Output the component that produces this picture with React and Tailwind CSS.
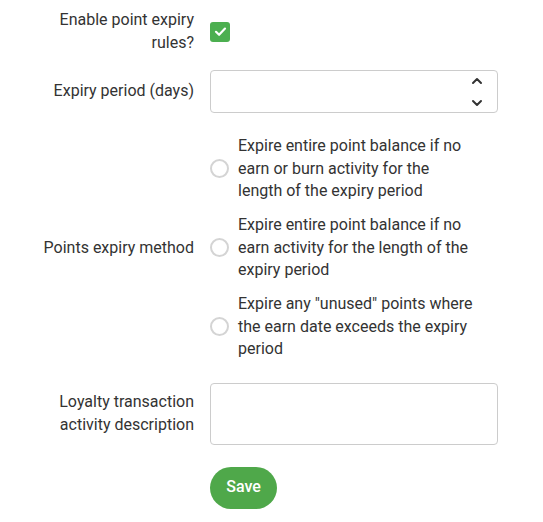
import React, { useState } from "react";

const options = [
  "Expire entire point balance if no earn or burn activity for the length of the expiry period",
  "Expire entire point balance if no earn activity for the length of the expiry period",
  'Expire any "unused" points where the earn date exceeds the expiry period',
];

function Row({ label, children, className = "" }) {
  return (
    <div className={`flex items-center gap-4 ${className}`}>
      <div className="w-[160px] shrink-0 text-right">{label}</div>
      <div className="w-[288px]">{children}</div>
    </div>
  );
}

export default function App() {
  const [enabled, setEnabled] = useState(true);
  const [method, setMethod] = useState(null);

  return (
    <div
      className="min-h-screen bg-white pl-[34px] pt-[9px] text-[16px] leading-[22.5px] text-[#333]"
      style={{ fontFamily: "Roboto, 'Liberation Sans', sans-serif" }}
    >
      <Row label={<span>Enable point expiry rules?</span>}>
        <button
          onClick={() => setEnabled(!enabled)}
          className={`flex h-5 w-5 items-center justify-center rounded-[3px] ${
            enabled ? "bg-[#4caf50]" : "border-2 border-[#ccc] bg-white"
          }`}
        >
          {enabled && (
            <svg width="13" height="13" viewBox="0 0 13 13" fill="none">
              <path d="M2 6.8 L5.1 9.8 L11 3.6" stroke="white" strokeWidth="2.2" strokeLinecap="round" strokeLinejoin="round" />
            </svg>
          )}
        </button>
      </Row>

      <Row label="Expiry period (days)" className="mt-4">
        <div className="relative h-[43px] rounded border border-[#ccc]">
          <input type="text" className="h-full w-full bg-transparent px-3 outline-none" />
          <div className="absolute right-[14px] top-[6px] flex flex-col gap-[14px]">
            <svg width="12" height="8" viewBox="0 0 12 8" fill="none">
              <path d="M2 6 L6 2 L10 6" stroke="#333" strokeWidth="2" strokeLinecap="round" strokeLinejoin="round" />
            </svg>
            <svg width="12" height="8" viewBox="0 0 12 8" fill="none">
              <path d="M2 2 L6 6 L10 2" stroke="#333" strokeWidth="2" strokeLinecap="round" strokeLinejoin="round" />
            </svg>
          </div>
        </div>
      </Row>

      <Row label="Points expiry method" className="mt-[22px]">
        <div className="flex flex-col gap-[11.5px]">
          {options.map((o, i) => (
            <label key={i} className="flex cursor-pointer items-center gap-[9px]">
              <span
                onClick={() => setMethod(i)}
                className={`flex h-[19px] w-[19px] shrink-0 items-center justify-center rounded-full border-2 ${
                  method === i ? "border-[#4caf50]" : "border-[#d4d4d4]"
                }`}
              >
                {method === i && <span className="h-[9px] w-[9px] rounded-full bg-[#4caf50]" />}
              </span>
              <span className="w-[237px]">{o}</span>
            </label>
          ))}
        </div>
      </Row>

      <Row
        label={<span>Loyalty transaction activity description</span>}
        className="mt-[22px]"
      >
        <textarea className="block h-[62px] w-full resize-none rounded border border-[#ccc] px-3 py-2 outline-none" />
      </Row>

      <div className="mt-[22px] pl-[176px]">
        <button className="h-[42px] w-[67px] rounded-full bg-[#4fa84a] font-medium text-white">
          Save
        </button>
      </div>
    </div>
  );
}
